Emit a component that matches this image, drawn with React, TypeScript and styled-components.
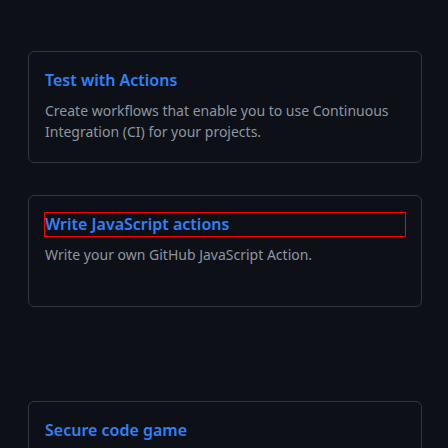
import React from 'react';
import styled, { createGlobalStyle } from 'styled-components';

type Guide = {
    title: string;
    description?: string;
    focused?: boolean;
};

const firstGroup: Guide[] = [
    {
        title: 'Test with Actions',
        description: 'Create workflows that enable you to use Continuous Integration (CI) for your projects.',
    },
    {
        title: 'Write JavaScript actions',
        description: 'Write your own GitHub JavaScript Action.',
        focused: true,
    },
];

const secondGroup: Guide[] = [
    { title: 'Secure code game' },
];

export default function App() {
    return (
        <>
            <GlobalStyle />
            <Page>
                <GuideList>
                    { firstGroup.map((guide) => <GuideCard key={guide.title} guide={guide} />) }
                </GuideList>
                <GuideList>
                    { secondGroup.map((guide) => <GuideCard key={guide.title} guide={guide} />) }
                </GuideList>
            </Page>
        </>
    );
}

function GuideCard({ guide }: { guide: Guide }) {
    return (
        <Card>
            <CardTitle focused={guide.focused}>
                { guide.title }
            </CardTitle>
            {
                guide.description && (
                    <CardDescription>
                        { guide.description }
                    </CardDescription>
                )
            }
        </Card>
    );
}

const GlobalStyle = createGlobalStyle`
    html, body {
        margin: 0;
        padding: 0;
        background: #0d1117;
        overflow: hidden;
    }

    body {
        font-family: "Noto Sans", "Liberation Sans", sans-serif;
    }
`;

const Page = styled.main`
    display: flex;
    flex-direction: column;
    gap: 94px;
    padding: 51px 26px 0 28px;
    height: 448px;
    box-sizing: border-box;
`;

const GuideList = styled.section`
    display: grid;
    grid-auto-rows: 112px;
    gap: 32px;
`;

const Card = styled.article`
    box-sizing: border-box;
    border: 1px solid #30363d;
    border-radius: 6px;
    padding: 17px 16px 16px;
    background: #0d1117;
`;

const CardTitle = styled.h3<{ focused?: boolean }>`
    margin: 0;
    font-size: 16px;
    font-weight: 600;
    line-height: 23px;
    color: #2f81f7;
    outline: ${(props) => props.focused ? '1px solid #ff0000' : 'none'};
`;

const CardDescription = styled.p`
    margin: 8px 0 0;
    font-size: 14px;
    line-height: 21px;
    color: #8d96a0;
`;
